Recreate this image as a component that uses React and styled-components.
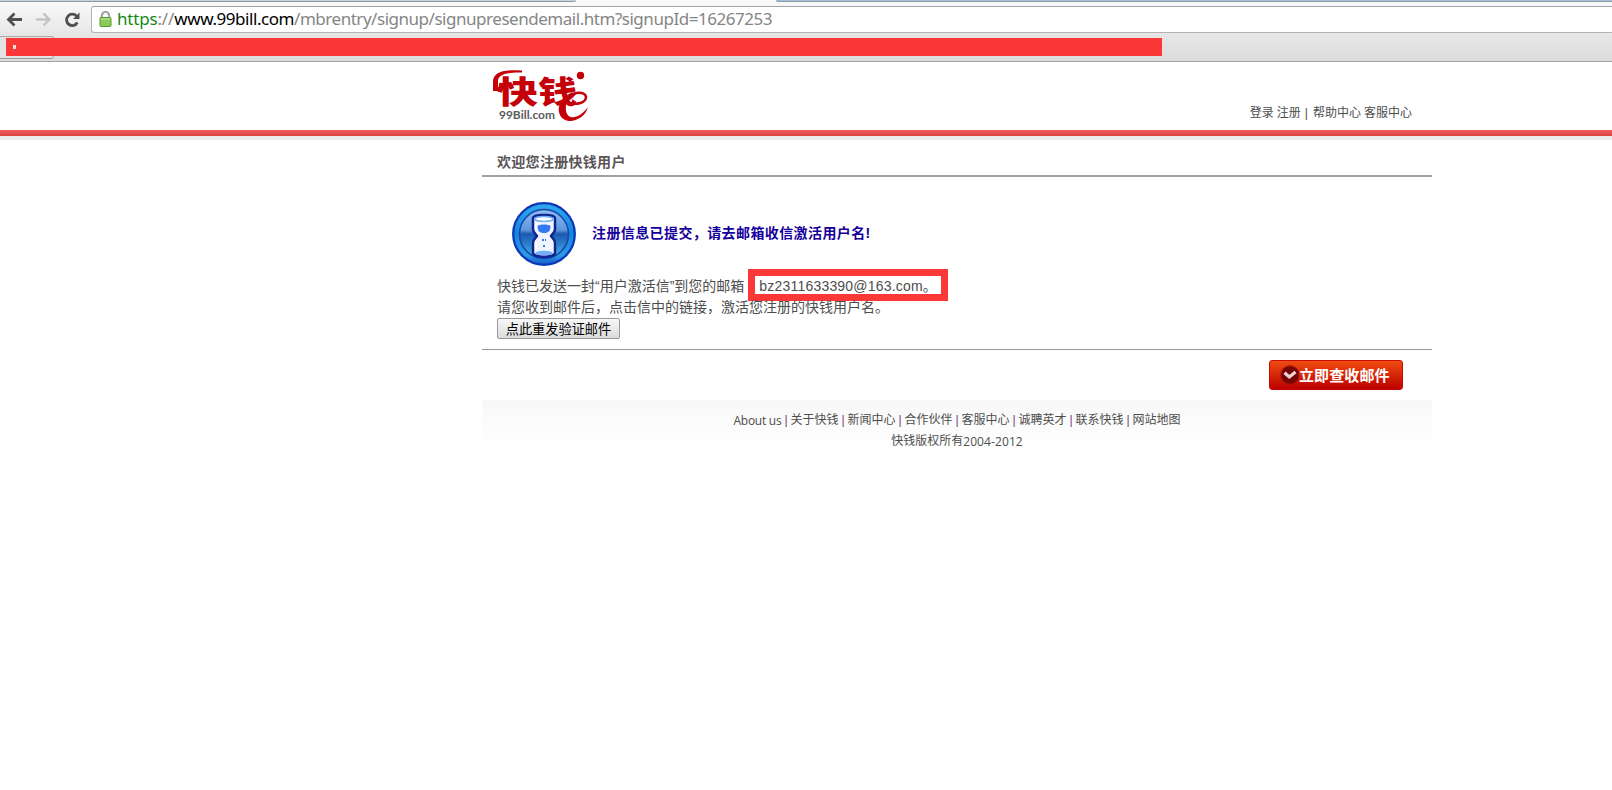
import React from "react";
import styled, { createGlobalStyle } from "styled-components";

const Global = createGlobalStyle`
  * { box-sizing: border-box; }
  body { margin: 0; background: #fff; color: #4d4d4d; font: 14px/21px "Liberation Sans", "Noto Sans CJK SC", sans-serif; overflow: hidden; }
`;

const Browser = styled.header`
  height: 62px;
  display: flex;
  flex-direction: column;
  border-bottom: 1px solid #a3a3a3;
  background: linear-gradient(#fafafa, #e6e6e6 36px, #dcdcdc);
`;
const TabStrip = styled.div`
  height: 2px;
  flex: none;
  display: flex;
  justify-content: space-between;
`;
const TabEdge = styled.div`
  width: ${(p) => p.$width}px;
  background: ${(p) => p.$fill};
  border-bottom: 1px solid #8d9ba6;
  border-radius: ${(p) => p.$radius};
`;
const Toolbar = styled.div`
  display: flex;
  height: 31px;
  padding-top: 4px;
  flex: none;
`;
const NavIcons = styled.div`
  width: 91px;
  flex: none;
`;
const Address = styled.div`
  flex: 1;
  height: 27px;
  display: flex;
  align-items: center;
  padding: 0 0 1px 7px;
  background: #fff;
  border: 1px solid #b3b3b3;
  border-top-color: #a3a3a3;
  border-right: 0;
  border-radius: 3px 0 0 3px;
`;
const Url = styled.div`
  margin-left: 5px;
  padding-bottom: 1px;
  font: 17px/24px "Noto Sans", sans-serif;
  color: #858585;
  white-space: nowrap;
  letter-spacing: -0.47px;
`;
const UrlPart = styled.span`
  color: ${(p) => p.$color};
  letter-spacing: ${(p) => p.$spacing}px;
`;
const Bookmarks = styled.div`
  display: flex;
  padding-top: 3px;
`;
const BookmarkButton = styled.div`
  width: 54px;
  height: 23px;
  flex: none;
  padding: 1px 0 0 6px;
  border: solid #aaa;
  border-width: 1px 1px 1px 0;
  border-bottom-color: #999;
  border-radius: 0 3px 3px 0;
  background: #e3e3e3;
`;
const Redaction = styled.div`
  width: 1156px;
  height: 18px;
  background: #fb3838;
  padding: 7px 0 0 7px;
`;
const Speck = styled.div`
  width: 3px;
  height: 4px;
  background: #f3dcd6;
`;

const Masthead = styled.div`
  height: 78px;
  border-bottom: 4px solid #ececec;
`;
const MastheadInner = styled.div`
  width: 950px;
  height: 68px;
  margin-left: 482px;
  display: flex;
  justify-content: space-between;
  padding: 6px 20px 0 9px;
`;
const RedRule = styled.div`
  height: 6px;
  background: linear-gradient(#ee5c5c, #d84343);
`;
const TopLinks = styled.nav`
  display: flex;
  padding-top: 35px;
  font-size: 12px;
  line-height: 20px;
`;
const TopItem = styled.span`
  margin-left: ${(p) => p.$gap || 0}px;
`;

const Main = styled.main`
  width: 950px;
  margin-left: 482px;
`;
const Title = styled.h1`
  margin: 0;
  height: 37px;
  padding: 11px 15px 0;
  border-bottom: 2px solid #a0a0a0;
  color: #5a5558;
  font-size: 14px;
  line-height: 22px;
  font-weight: 700;
  letter-spacing: 0.3px;
`;
const Notice = styled.section`
  height: 173px;
  padding: 25px 15px 0;
  border-bottom: 1px solid #999;
`;
const Status = styled.div`
  display: flex;
  align-items: center;
  height: 64px;
  padding-left: 15px;
  gap: 16px;
`;
const StatusText = styled.strong`
  padding-bottom: 2px;
  color: #15009b;
  font-size: 14px;
  letter-spacing: 0.4px;
`;
const Line = styled.div`
  display: flex;
  align-items: center;
  height: 21px;
  white-space: nowrap;
  margin-top: ${(p) => p.$top || 0}px;
`;
const Marked = styled.span`
  display: flex;
  align-items: center;
  width: 200px;
  height: 32px;
  margin: -7px 0 -4px 4px;
  padding: 3px 0 0 4px;
  border: 7px solid #fb3838;
  letter-spacing: 0.2px;
  white-space: nowrap;
`;
const Resend = styled.button`
  display: block;
  width: 123px;
  height: 21px;
  padding: 0;
  border: 1px solid #999;
  border-radius: 2px;
  background: linear-gradient(#f7f7f7, #dcdcdc);
  color: #000;
  font: 13.2px/17px "Noto Sans CJK SC", sans-serif;
`;
const Actions = styled.div`
  height: 50px;
  display: flex;
  justify-content: flex-end;
  padding: 10px 29px 0 0;
`;
const CheckMail = styled.button`
  width: 134px;
  height: 30px;
  display: flex;
  align-items: center;
  padding: 0 0 0 10px;
  border: 1px solid #c70a08;
  border-radius: 3px;
  background: linear-gradient(#ef4c10, #bd0000);
  color: #fff;
  font: bold 15px/28px "Noto Sans CJK SC", sans-serif;
  letter-spacing: 0.1px;
  white-space: nowrap;
`;
const Footer = styled.footer`
  height: 50px;
  padding: 10px 0 0;
  background: linear-gradient(#f8f8f8, #fff);
  font: 12px/21px "Liberation Sans", "Noto Sans CJK SC", sans-serif;
`;
const FooterRow = styled.div`
  display: flex;
  justify-content: center;
`;
const Latin = styled.span`
  font-family: "Open Sans", sans-serif;
  letter-spacing: ${(p) => p.$spacing || 0}px;
`;
const Bar = styled.span`
  width: 9px;
  text-align: center;
  color: #77417c;
`;

const NavGlyphs = () => (
  <svg width="91" height="27" viewBox="0 6 91 27" fill="none" display="block">
    <path d="M22 19.500H9M14.500 13.500l-6 6 6 6" stroke="#4f4f4f" strokeWidth="2.800" />
    <path d="M36 19.500h13M43.500 13.500l6 6-6 6" stroke="#c3c3c3" strokeWidth="2.300" />
    <path d="M77.300 22.500a5.700 5.700 0 1 1-.8-6.500" stroke="#4f4f4f" strokeWidth="2.800" />
    <path d="M79.500 12.500v6.500h-6.500z" fill="#4f4f4f" />
  </svg>
);

const Lock = () => (
  <svg width="13" height="16" viewBox="0 0 13 16" fill="none">
    <path d="M3 8V4.500a3.500 3.500 0 0 1 7 0V8" stroke="#8d8d8d" strokeWidth="2.200" />
    <path d="M3.300 8V4.500a3.200 3.200 0 0 1 6.400 0V8" stroke="#d0d0d0" strokeWidth=".8" />
    <rect x="1" y="6.500" width="11" height="9" rx="1" fill="#8ccb5a" stroke="#569b32" />
    <path d="M2 8h9" stroke="#c1e99e" />
  </svg>
);

const Logo = () => (
  <svg width="102" height="56" viewBox="0 0 102 56" fill="none" overflow="visible">
    <g fill="#c40009" fontFamily="Noto Sans CJK SC, sans-serif" fontWeight="900" fontSize="31">
      <text x="6" y="35" textLength="41" lengthAdjust="spacingAndGlyphs">快</text>
      <text x="47" y="35" textLength="39" lengthAdjust="spacingAndGlyphs">钱</text>
    </g>
    <path d="M31 2.500C13 1 2 4 2 14v9h9v-4H7v-6c0-6 7-9 24-8.500z" fill="#c40009" />
    <circle cx="89.500" cy="7.500" r="3.700" fill="#c40009" />
    <path d="M72 33c6-9 22-11 23-4 0 6-9 8-18 6" stroke="#c40009" strokeWidth="2.500" />
    <path d="M75 28c-7 6-9 13-6 19 2 4 6 6 11 6 8-1 15-6 17-14-6 8-12 11-17 10-6-1-7-12-2-19z" fill="#c40009" />
    <text x="8" y="51" fill="#5b5b5b" fontFamily="Lato, sans-serif" fontSize="11.500" fontWeight="700" textLength="56" lengthAdjust="spacingAndGlyphs">99Bill.com</text>
  </svg>
);

const Hourglass = () => (
  <svg width="64" height="64" viewBox="0 0 64 64" fill="none">
    <defs>
      <linearGradient id="ring" x2="0" y2="1"><stop stopColor="#2fa9ef" /><stop offset=".5" stopColor="#1684dd" /><stop offset=".85" stopColor="#2c9be8" /><stop offset="1" stopColor="#1155c8" /></linearGradient>
      <linearGradient id="disc" x2="0" y2="1"><stop stopColor="#8fbcf0" /><stop offset=".42" stopColor="#5f95da" /><stop offset=".5" stopColor="#1c57b2" /><stop offset="1" stopColor="#43baf0" /></linearGradient>
    </defs>
    <circle cx="32" cy="32" r="30.800" fill="url(#ring)" stroke="#0c38b8" strokeWidth="2.300" />
    <circle cx="32" cy="32" r="24.500" fill="url(#disc)" stroke="#1646ac" strokeWidth="1.500" />
    <path d="M21 16c0-4 22-4 22 0v11c0 4-3 5-4 7 1 2 4 3 4 7v10c0 5-22 5-22 0V41c0-4 3-5 4-7-1-2-4-3-4-7z" fill="#f2f5ff" stroke="#12258e" strokeWidth="2.500" />
    <ellipse cx="32" cy="17" rx="9" ry="2.500" fill="#fff" stroke="#6caff4" strokeWidth="1.500" />
    <path d="M25.500 24c2-2 11-2 13 0 0 6-3 7-6.500 7s-6.500-1-6.500-7z" fill="#3478f5" />
    <path d="M23 51c2-3 16-3 18 0 0 3-18 3-18 0z" fill="#71aff8" />
    <path d="M30 37h2v2h-2zm3 0h1v2h-1zm-2 6h2v2h-2z" fill="#3478f5" />
    <path d="M24 20v7m0 15v7" stroke="#fff" strokeWidth="2" />
  </svg>
);

const CheckBadge = () => (
  <svg width="19" height="22" viewBox="0 0 19 22" fill="none">
    <circle cx="10" cy="11" r="9.200" fill="#780407" stroke="#a4190b" />
    <path d="M4.500 8.800l4.800 4.200 6.200-5" stroke="#f0d6d3" strokeWidth="3.200" />
  </svg>
);

const footerLinks = ["关于快钱", "新闻中心", "合作伙伴", "客服中心", "诚聘英才", "联系快钱", "网站地图"];

export default function App() {
  return (
    <>
      <Global />
      <Browser>
        <TabStrip>
          <TabEdge $width={576} $fill="#c5d3de" $radius="0 0 3px 0" />
          <TabEdge $width={836} $fill="#a4bfd9" $radius="0 0 0 3px" />
        </TabStrip>
        <Toolbar>
          <NavIcons><NavGlyphs /></NavIcons>
          <Address>
            <Lock />
            <Url>
              <UrlPart $color="#138a13" $spacing={-0.2}>https</UrlPart>
              <UrlPart $color="#858585" $spacing={-0.1}>://</UrlPart>
              <UrlPart $color="#000" $spacing={-0.44}>www.99bill.com</UrlPart>
              /mbrentry/signup/signupresendemail.htm?signupId=16267253
            </Url>
          </Address>
        </Toolbar>
        <Bookmarks>
          <BookmarkButton><Redaction><Speck /></Redaction></BookmarkButton>
        </Bookmarks>
      </Browser>
      <Masthead>
        <MastheadInner>
          <Logo />
          <TopLinks>
            <TopItem>登录</TopItem>
            <TopItem $gap={3}>注册</TopItem>
            <TopItem $gap={4}>|</TopItem>
            <TopItem $gap={5}>帮助中心</TopItem>
            <TopItem $gap={3}>客服中心</TopItem>
          </TopLinks>
        </MastheadInner>
        <RedRule />
      </Masthead>
      <Main>
        <Title>欢迎您注册快钱用户</Title>
        <Notice>
          <Status>
            <Hourglass />
            <StatusText>注册信息已提交，请去邮箱收信激活用户名!</StatusText>
          </Status>
          <Line $top={10}>
            快钱已发送一封“用户激活信”到您的邮箱
            <Marked>bz2311633390@163.com。</Marked>
          </Line>
          <Line>请您收到邮件后，点击信中的链接，激活您注册的快钱用户名。</Line>
          <Resend>点此重发验证邮件</Resend>
        </Notice>
        <Actions>
          <CheckMail><CheckBadge />立即查收邮件</CheckMail>
        </Actions>
        <Footer>
          <FooterRow>
            <Latin $spacing={-0.25}>About us</Latin>
            {footerLinks.map((label) => (
              <React.Fragment key={label}><Bar>|</Bar><span>{label}</span></React.Fragment>
            ))}
          </FooterRow>
          <FooterRow>快钱版权所有<Latin $spacing={0.1}>2004-2012</Latin></FooterRow>
        </Footer>
      </Main>
    </>
  );
}
